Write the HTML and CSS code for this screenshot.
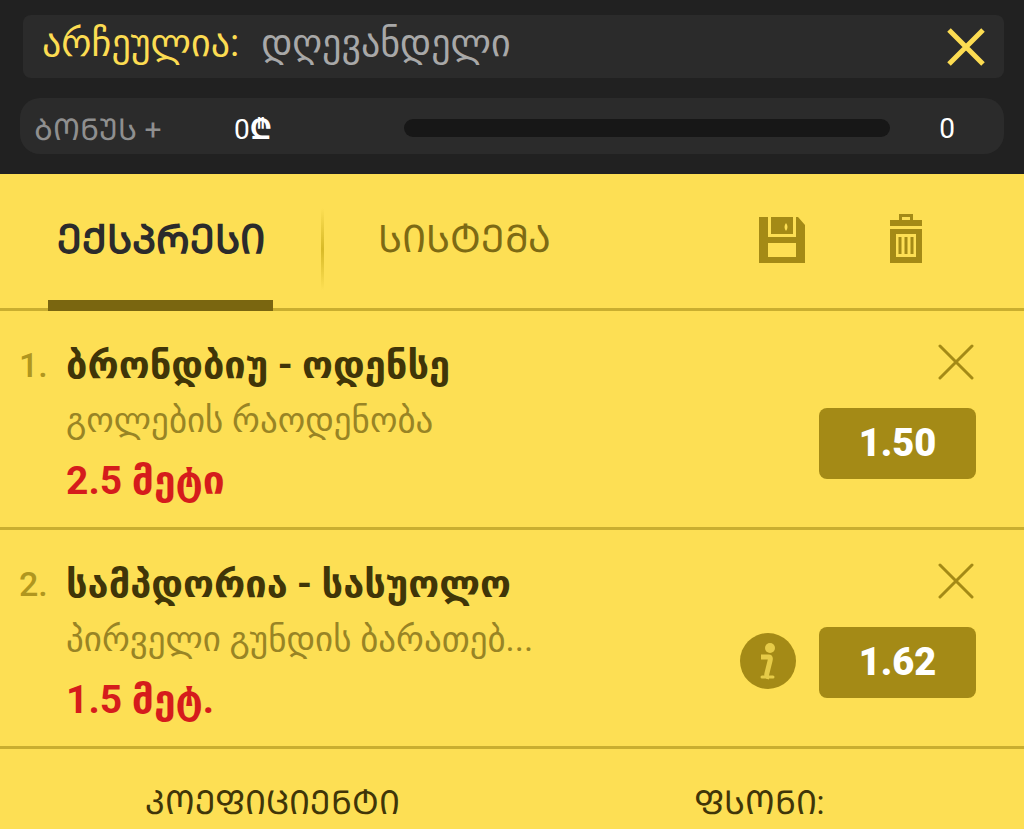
FILE: index.html
```
<!DOCTYPE html>
<html lang="ka">
  <head>
    <meta charset="utf-8" />
    <title>ბილეთი</title>
    <meta name="viewport" content="width=device-width, initial-scale=1.0" />
    <link rel="stylesheet" href="styles.css">
  </head>

  <body>
    <header class="top">
      <div class="selected-bar">
        <span class="selected-label">არჩეულია:</span>
        <span class="selected-value">დღევანდელი</span>
        <button class="icon-button close-button" aria-label="დახურვა">
          <svg width="38" height="38" viewBox="0 0 38 38">
            <path d="M2 2L36 36M36 2L2 36" stroke="#fcdc52" stroke-width="5" />
          </svg>
        </button>
      </div>
      <div class="bonus-bar">
        <span class="bonus-label">ᲑᲝᲜᲣᲡ +</span>
        <span class="bonus-amount">0<b>₾</b></span>
        <div class="bonus-track" role="progressbar" aria-label="ბონუსი" aria-valuenow="0" aria-valuemin="0" aria-valuemax="100"></div>
        <span class="bonus-count">0</span>
      </div>
    </header>

    <nav class="tabs">
      <button class="tab active">ᲔᲥᲡᲞᲠᲔᲡᲘ</button>
      <span class="tab-divider"></span>
      <button class="tab">ᲡᲘᲡᲢᲔᲛᲐ</button>
      <div class="tab-actions">
        <button class="icon-button" aria-label="შენახვა">
          <svg width="46" height="46" viewBox="0 0 46 46">
            <path fill="#a48a16" fill-rule="evenodd" d="M0 0H9V20H37V0H39L46 8V46H0ZM9 26V40H37V26Z" />
            <path fill="#a48a16" fill-rule="evenodd" d="M12 0H34V17H12ZM27 6Q24 10 27 14Q30 10 27 6Z" />
          </svg>
        </button>
        <button class="icon-button" aria-label="წაშლა">
          <svg width="32" height="49" viewBox="0 0 32 49">
            <path fill="#a48a16" fill-rule="evenodd" d="M9 0H23V6H32V12H0V6H9ZM12 3V6H20V3Z" />
            <path fill="#a48a16" fill-rule="evenodd" d="M0 15H32V49H0ZM6 20V43H26V20Z" />
            <path stroke="#a48a16" stroke-width="3" d="M10 23V40M16 23V40M22 23V40" />
          </svg>
        </button>
      </div>
    </nav>

    <main>
      <article class="bet">
        <span class="bet-number">1.</span>
        <div class="bet-info">
          <h2 class="bet-title">ბრონდბიუ - ოდენსე</h2>
          <p class="bet-market">გოლების რაოდენობა</p>
          <p class="bet-pick">2.5 მეტი</p>
        </div>
        <div class="bet-side">
          <button class="icon-button remove-button" aria-label="წაშლა">
            <svg width="36" height="36" viewBox="0 0 36 36">
              <path d="M2 2L34 34M34 2L2 34" stroke="#a48a16" stroke-width="3" stroke-linecap="round" />
            </svg>
          </button>
          <div class="bet-odds">
            <span class="odd">1.50</span>
          </div>
        </div>
      </article>

      <article class="bet">
        <span class="bet-number">2.</span>
        <div class="bet-info">
          <h2 class="bet-title">სამპდორია - სასუოლო</h2>
          <p class="bet-market">პირველი გუნდის ბარათებ...</p>
          <p class="bet-pick">1.5 მეტ.</p>
        </div>
        <div class="bet-side">
          <button class="icon-button remove-button" aria-label="წაშლა">
            <svg width="36" height="36" viewBox="0 0 36 36">
              <path d="M2 2L34 34M34 2L2 34" stroke="#a48a16" stroke-width="3" stroke-linecap="round" />
            </svg>
          </button>
          <div class="bet-odds">
            <button class="icon-button info-button" aria-label="ინფორმაცია">
              <svg width="58" height="58" viewBox="0 0 58 58">
                <circle cx="29" cy="29" r="28" fill="#a48a16" />
                <circle cx="31" cy="16" r="5" fill="#e6cb48" />
                <path d="M22 25H30Q32 25 31 29L28 41Q27 45 30 45" fill="none" stroke="#e6cb48" stroke-width="5" />
                <path d="M23 45H34" stroke="#e6cb48" stroke-width="3" stroke-linecap="round" />
              </svg>
            </button>
            <span class="odd">1.62</span>
          </div>
        </div>
      </article>
    </main>

    <footer class="totals">
      <span>ᲙᲝᲔᲤᲘᲪᲘᲔᲜᲢᲘ</span>
      <span>ᲤᲡᲝᲜᲘ:</span>
    </footer>
  </body>
</html>
```
FILE: styles.css
```
* {
  box-sizing: border-box;
}

body {
  margin: 0;
  background-color: #fddf54;
  color: #403508;
  font-family: Roboto, "Noto Sans", "DejaVu Sans", sans-serif;
}

button {
  font-family: inherit;
  border: none;
  background: none;
  padding: 0;
  cursor: pointer;
}

.icon-button svg {
  display: block;
}

/* Dark header */
.top {
  display: flex;
  flex-direction: column;
  gap: 20px;
  padding: 15px 20px 20px;
  background-color: #212121;
}

.selected-bar {
  display: flex;
  align-items: center;
  height: 63px;
  margin-left: 3px;
  padding: 0 19px;
  border-radius: 8px;
  background-color: #2b2b2b;
  font-size: 38px;
}

.selected-label,
.selected-value {
  padding-bottom: 8px;
}

.selected-label {
  color: #fcdc52;
}

.selected-value {
  margin-left: 22px;
  color: #a8a8a8;
}

.close-button {
  margin-left: auto;
}

.bonus-bar {
  display: grid;
  grid-template-columns: 200px 170px 1fr 114px;
  align-items: center;
  height: 56px;
  padding-top: 4px;
  padding-left: 14px;
  border-radius: 20px;
  background-color: #2b2b2b;
  color: white;
  font-size: 28px;
}

.bonus-label {
  color: #8f8f8f;
  font-size: 30px;
}

.bonus-track {
  height: 18px;
  border-radius: 9px;
  background-color: #171717;
}

.bonus-count {
  text-align: center;
}

/* Tabs */
.tabs {
  display: flex;
  height: 137px;
  padding-left: 48px;
  border-bottom: 3px solid #c9ae30;
}

.tab {
  width: 225px;
  margin-bottom: -3px;
  border-bottom: 11px solid transparent;
  color: #7d6a14;
  font-size: 38px;
}

.tab.active {
  border-bottom-color: #7a6610;
  color: #2b2b2b;
  font-size: 40px;
  font-weight: bold;
}

.tab-divider {
  width: 3px;
  margin: 34px 28px 18px 48px;
  background: linear-gradient(transparent, #d8ba28, transparent);
}

.tab-actions {
  display: flex;
  align-items: flex-end;
  gap: 85px;
  margin-left: auto;
  padding-right: 102px;
  padding-bottom: 45px;
}

/* Bets */
.bet {
  display: flex;
  height: 219px;
  padding: 30px 48px 0 19px;
  border-bottom: 3px solid #c9ae30;
}

.bet-number {
  width: 47px;
  color: #b0961f;
  font-size: 34px;
  font-weight: 500;
  line-height: 48px;
}

.bet-info {
  flex: 1;
  min-width: 0;
}

.bet-title {
  margin: 0;
  font-size: 38px;
  line-height: 48px;
}

.bet-market {
  margin: 8px 0;
  color: #988425;
  font-size: 35px;
  line-height: 48px;
}

.bet-pick {
  margin: 0;
  color: #d51c1c;
  font-size: 39px;
  font-weight: bold;
  line-height: 56px;
}

.bet-side {
  display: flex;
  flex-direction: column;
  align-items: flex-end;
  gap: 28px;
  padding-top: 3px;
}

.remove-button {
  margin-right: 2px;
}

.bet-odds {
  display: flex;
  align-items: center;
  gap: 22px;
}

.info-button {
  padding-bottom: 4px;
}

.odd {
  width: 157px;
  border-radius: 8px;
  background-color: #a48a16;
  color: white;
  font-size: 38px;
  font-weight: 900;
  line-height: 71px;
  text-align: center;
}

/* Totals */
.totals {
  display: grid;
  grid-template-columns: 544px 1fr;
  padding-top: 30px;
  padding-right: 50px;
  font-size: 33px;
  line-height: 48px;
  text-align: center;
}
```
